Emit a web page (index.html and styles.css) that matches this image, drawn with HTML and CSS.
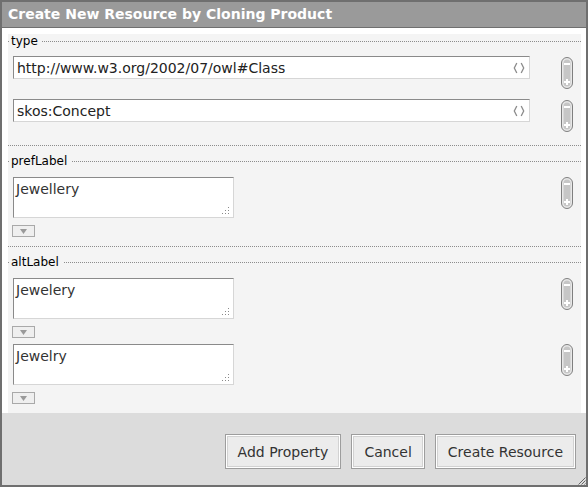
FILE: index.html
```html
<!DOCTYPE html>
<html>
<head>
<meta charset="utf-8">
<link rel="stylesheet" href="styles.css">
</head>
<body>
<div class="dialog">
  <div class="titlebar">Create New Resource by Cloning Product</div>
  <div class="body">
   <div class="panel">
    <fieldset class="prop first">
      <legend>type</legend>
      <div class="rows">
        <div class="row">
          <div class="field"><span>http://www.w3.org/2002/07/owl#Class</span><svg class="chev" width="12" height="12" viewBox="0 0 12 12"><path d="M3.8 1 L1.3 6 L3.8 11 M8.2 1 L10.7 6 L8.2 11" fill="none" stroke="#8c8c8c" stroke-width="1.3"/></svg></div>
          <svg class="pm" width="12" height="32" viewBox="0 0 12 32"><rect x="0.5" y="0.5" width="11" height="31" rx="5.5" fill="#e8e8e8" stroke="#7f7f7f"/><rect x="2.5" y="2.5" width="7" height="27" rx="3.5" fill="#c6c6c6"/><rect x="3" y="6" width="6" height="2" fill="#fff"/><rect x="3" y="24" width="6" height="2" fill="#fff"/><rect x="5" y="22" width="2" height="6" fill="#fff"/></svg>
        </div>
        <div class="row">
          <div class="field"><span>skos:Concept</span><svg class="chev" width="12" height="12" viewBox="0 0 12 12"><path d="M3.8 1 L1.3 6 L3.8 11 M8.2 1 L10.7 6 L8.2 11" fill="none" stroke="#8c8c8c" stroke-width="1.3"/></svg></div>
          <svg class="pm" width="12" height="32" viewBox="0 0 12 32"><rect x="0.5" y="0.5" width="11" height="31" rx="5.5" fill="#e8e8e8" stroke="#7f7f7f"/><rect x="2.5" y="2.5" width="7" height="27" rx="3.5" fill="#c6c6c6"/><rect x="3" y="6" width="6" height="2" fill="#fff"/><rect x="3" y="24" width="6" height="2" fill="#fff"/><rect x="5" y="22" width="2" height="6" fill="#fff"/></svg>
        </div>
      </div>
    </fieldset>

    <fieldset class="prop">
      <legend>prefLabel</legend>
      <div class="items">
        <div class="item">
          <div class="row">
            <div class="area">Jewellery<svg class="grip" width="8" height="8" viewBox="0 0 8 8"><g fill="#8a8a8a"><rect x="7" y="1" width="1" height="1"/><rect x="4" y="4" width="1" height="1"/><rect x="7" y="4" width="1" height="1"/><rect x="1" y="7" width="1" height="1"/><rect x="4" y="7" width="1" height="1"/><rect x="7" y="7" width="1" height="1"/></g></svg></div>
            <svg class="pm pm-area" width="12" height="32" viewBox="0 0 12 32"><rect x="0.5" y="0.5" width="11" height="31" rx="5.5" fill="#e8e8e8" stroke="#7f7f7f"/><rect x="2.5" y="2.5" width="7" height="27" rx="3.5" fill="#c6c6c6"/><rect x="3" y="6" width="6" height="2" fill="#fff"/><rect x="3" y="24" width="6" height="2" fill="#fff"/><rect x="5" y="22" width="2" height="6" fill="#fff"/></svg>
          </div>
          <div class="lang"><svg width="7" height="5" viewBox="0 0 7 5"><path d="M0 0 H7 L3.5 5 Z" fill="#9a9a9a"/></svg></div>
        </div>
      </div>
    </fieldset>

    <fieldset class="prop last">
      <legend>altLabel</legend>
      <div class="items">
        <div class="item">
          <div class="row">
            <div class="area">Jewelery<svg class="grip" width="8" height="8" viewBox="0 0 8 8"><g fill="#8a8a8a"><rect x="7" y="1" width="1" height="1"/><rect x="4" y="4" width="1" height="1"/><rect x="7" y="4" width="1" height="1"/><rect x="1" y="7" width="1" height="1"/><rect x="4" y="7" width="1" height="1"/><rect x="7" y="7" width="1" height="1"/></g></svg></div>
            <svg class="pm pm-area" width="12" height="32" viewBox="0 0 12 32"><rect x="0.5" y="0.5" width="11" height="31" rx="5.5" fill="#e8e8e8" stroke="#7f7f7f"/><rect x="2.5" y="2.5" width="7" height="27" rx="3.5" fill="#c6c6c6"/><rect x="3" y="6" width="6" height="2" fill="#fff"/><rect x="3" y="24" width="6" height="2" fill="#fff"/><rect x="5" y="22" width="2" height="6" fill="#fff"/></svg>
          </div>
          <div class="lang"><svg width="7" height="5" viewBox="0 0 7 5"><path d="M0 0 H7 L3.5 5 Z" fill="#9a9a9a"/></svg></div>
        </div>
        <div class="item">
          <div class="row">
            <div class="area">Jewelry<svg class="grip" width="8" height="8" viewBox="0 0 8 8"><g fill="#8a8a8a"><rect x="7" y="1" width="1" height="1"/><rect x="4" y="4" width="1" height="1"/><rect x="7" y="4" width="1" height="1"/><rect x="1" y="7" width="1" height="1"/><rect x="4" y="7" width="1" height="1"/><rect x="7" y="7" width="1" height="1"/></g></svg></div>
            <svg class="pm pm-area" width="12" height="32" viewBox="0 0 12 32"><rect x="0.5" y="0.5" width="11" height="31" rx="5.5" fill="#e8e8e8" stroke="#7f7f7f"/><rect x="2.5" y="2.5" width="7" height="27" rx="3.5" fill="#c6c6c6"/><rect x="3" y="6" width="6" height="2" fill="#fff"/><rect x="3" y="24" width="6" height="2" fill="#fff"/><rect x="5" y="22" width="2" height="6" fill="#fff"/></svg>
          </div>
          <div class="lang"><svg width="7" height="5" viewBox="0 0 7 5"><path d="M0 0 H7 L3.5 5 Z" fill="#9a9a9a"/></svg></div>
        </div>
      </div>
    </fieldset>
   </div>
  </div>
  <div class="footer">
    <button class="btn">Add Property</button>
    <button class="btn">Cancel</button>
    <button class="btn">Create Resource</button>
    <svg class="resize" width="9" height="9" viewBox="0 0 9 9"><path d="M8.5 1.5 L1.5 8.5 M8.5 4.5 L4.5 8.5 M8.5 7.5 L7.5 8.5" stroke="#666" stroke-width="1"/></svg>
  </div>
</div>
</body>
</html>
```

FILE: styles.css
```css
* { box-sizing: border-box; }
html, body { margin: 0; padding: 0; }
body {
  font-family: "DejaVu Sans", Verdana, sans-serif;
  background: #fff;
  width: 588px;
  height: 487px;
  overflow: hidden;
}
.dialog {
  width: 588px;
  height: 487px;
  border: 2px solid #6f6f6f;
  display: flex;
  flex-direction: column;
  background: #fff;
}
.titlebar {
  flex: none;
  height: 26px;
  background: #9a9a9a;
  border-bottom: 1px solid #6f6f6f;
  color: #fff;
  font-weight: bold;
  font-size: 14px;
  line-height: 24px;
  padding-left: 6px;
  white-space: nowrap;
}
.body {
  flex: 1;
  min-height: 0;
  overflow: hidden;
  padding: 13px 5px 0 6px;
}
.panel {
  background: #f4f4f4;
}
.prop {
  margin: 0 0 8px 0;
  padding: 0;
  border: 0;
  border-top: 1px dotted #8c8c8c;
  border-bottom: 1px dotted #8c8c8c;
  background: #f4f4f4;
  min-width: 0;
}
.prop.first { margin-top: -7px; }
.prop.last { margin-bottom: 0; }
.prop legend {
  font-size: 12px;
  line-height: 14px;
  padding: 0 4px 0 2px;
  margin-left: 1px;
  color: #000;
}
.rows {
  display: flex;
  flex-direction: column;
  gap: 10px;
  padding: 8px 8px 13px 5px;
}
.row {
  display: flex;
  justify-content: space-between;
  align-items: flex-start;
}
.field {
  flex: 1;
  height: 23px;
  margin-right: 31px;
  background: #fff;
  border: 1px solid;
  border-color: #8a8a8a #d6d6d6 #d6d6d6 #8a8a8a;
  display: flex;
  align-items: center;
  justify-content: space-between;
  padding: 0 4px 0 3px;
  font-size: 14px;
  color: #222;
}
.chev { display: block; flex: none; }
.pm { display: block; flex: none; margin-top: 1px; }
.pm-area { margin-top: 0; }
.items {
  display: flex;
  flex-direction: column;
  gap: 6px;
  padding: 9px 8px 9px 5px;
}
.item {
  display: flex;
  flex-direction: column;
  align-items: stretch;
  gap: 7px;
}
.area {
  position: relative;
  width: 221px;
  height: 41px;
  background: #fff;
  border: 1px solid;
  border-color: #8a8a8a #d6d6d6 #d6d6d6 #8a8a8a;
  padding: 3px 2px;
  font-size: 14px;
  line-height: 17px;
  color: #333;
}
.grip {
  position: absolute;
  right: 4px;
  bottom: 3px;
  display: block;
}
.lang {
  width: 23px;
  height: 12px;
  margin-left: -1px;
  border: 1px solid #a9a9a9;
  background: #efefef;
  display: flex;
  align-items: center;
  justify-content: center;
}
.lang svg { display: block; }
.footer {
  position: relative;
  flex: none;
  height: 72px;
  background: #dcdcdc;
  display: flex;
  justify-content: flex-end;
  align-items: flex-start;
  gap: 10px;
  padding: 21px 10px 0 0;
}
.btn {
  height: 35px;
  font-family: "DejaVu Sans", Verdana, sans-serif;
  font-size: 14px;
  color: #333;
  background: #ececec;
  border: 1px solid #9d9d9d;
  box-shadow: inset 1px 1px 0 #fff, inset -1px -1px 0 #fff, inset 0 0 0 2px #d2d2d2;
  padding: 0 12px;
  margin: 0;
  border-radius: 0;
}
.resize {
  position: absolute;
  right: 0;
  bottom: 0;
  display: block;
}
```
